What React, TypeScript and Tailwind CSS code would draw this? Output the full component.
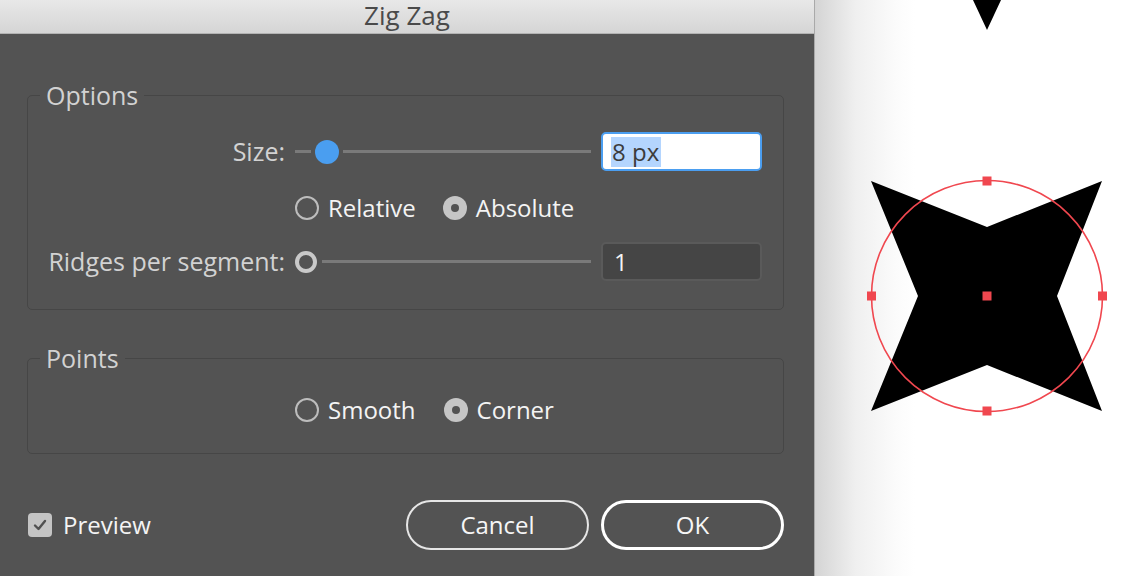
import React from "react";

const font = { fontFamily: '"Open Sans", "Noto Sans", sans-serif' };

function Radio({ label, checked }: { label: string; checked?: boolean }) {
  return (
    <div className="flex items-center gap-[9px]">
      {checked ? (
        <span className="w-[24px] h-[24px] rounded-full bg-[#c6c6c6] flex items-center justify-center">
          <span className="w-[8px] h-[8px] rounded-full bg-[#535353]" />
        </span>
      ) : (
        <span className="w-[24px] h-[24px] rounded-full border-2 border-[#bdbdbd]" />
      )}
      <span className="text-[24px] leading-none text-[#f4f4f4] font-medium">{label}</span>
    </div>
  );
}

function Track({ className }: { className: string }) {
  return <div className={"h-[3px] bg-[#7a7a7a] " + className} />;
}

export default function App() {
  return (
    <div className="w-[1136px] h-[576px] flex overflow-hidden" style={font}>
      {/* dialog */}
      <div className="w-[815px] h-full flex flex-col bg-[#535353] border-r border-[#a9a9a9]">
        <div className="h-[34px] shrink-0 flex items-start justify-center bg-gradient-to-b from-[#e8e8e8] to-[#d5d5d5] border-b border-[#b3b3b3]">
          <span className="text-[26px] leading-[30px] text-[#4a4a4a]">Zig Zag</span>
        </div>

        <div className="flex-1 flex flex-col pl-[27px] pr-[30px] pt-[49px]">
          {/* Options */}
          <fieldset className="border border-[#464646] rounded-[5px] pb-[28px]">
            <legend className="ml-[12px] px-[6px] text-[25px] leading-[25px] text-[#d2d2d2]">Options</legend>
            <div className="pt-[24px] pl-[19px] pr-[20px] flex flex-col">
              <div className="h-[39px] grid grid-cols-[238px_296px_161px] gap-x-[10px] items-center">
                <span className="text-[25px] leading-none text-[#d2d2d2] text-right">Size:</span>
                <div className="flex items-center">
                  <Track className="w-[16px]" />
                  <span className="ml-[4px] w-[24px] h-[24px] rounded-full bg-[#4a9ef0]" />
                  <Track className="ml-[4px] flex-1" />
                </div>
                <div className="h-[39px] rounded-[5px] border-2 border-[#4b9ef0] bg-white flex items-center pl-[8px]">
                  <span className="bg-[#b4d5fe] text-[24px] leading-[30px] text-[#3c3c3c] pr-[2px] pl-[1px]">8 px</span>
                </div>
              </div>
              <div className="h-[24px] mt-[25px] grid grid-cols-[238px_1fr] gap-x-[10px] items-center">
                <span />
                <div className="flex items-center gap-[27px]">
                  <Radio label="Relative" />
                  <Radio label="Absolute" checked />
                </div>
              </div>
              <div className="h-[39px] mt-[22px] grid grid-cols-[238px_296px_161px] gap-x-[10px] items-center">
                <span className="text-[25px] leading-none text-[#d2d2d2] text-right whitespace-nowrap">Ridges per segment:</span>
                <div className="flex items-center">
                  <span className="w-[22px] h-[22px] rounded-full border-4 border-[#c9c9c9]" />
                  <Track className="ml-[5px] flex-1" />
                </div>
                <div className="h-[39px] rounded-[5px] border-2 border-[#5a5a5a] bg-[#454545] flex items-center pl-[11px]">
                  <span className="text-[24px] leading-none text-[#f4f4f4]">1</span>
                </div>
              </div>
            </div>
          </fieldset>

          {/* Points */}
          <fieldset className="mt-[36px] border border-[#464646] rounded-[5px] pb-[31px]">
            <legend className="ml-[12px] px-[6px] text-[25px] leading-[25px] text-[#d2d2d2]">Points</legend>
            <div className="pt-[27px] pl-[19px] pr-[20px] h-[51px] grid grid-cols-[238px_1fr] gap-x-[10px] items-center">
              <span />
              <div className="flex items-center gap-[28px]">
                <Radio label="Smooth" />
                <Radio label="Corner" checked />
              </div>
            </div>
          </fieldset>

          {/* footer */}
          <div className="mt-[46px] flex items-center">
            <div className="flex items-center gap-[11px] ml-[1px]">
              <span className="w-[24px] h-[24px] rounded-[4px] bg-[#c4c4c4] flex items-center justify-center">
                <svg width="16" height="16" viewBox="0 0 16 16">
                  <path d="M3 8.5 L6.5 12 L13 4" fill="none" stroke="#505050" strokeWidth="2.4" strokeLinecap="round" strokeLinejoin="round" />
                </svg>
              </span>
              <span className="text-[24px] leading-none text-[#f4f4f4] font-medium">Preview</span>
            </div>
            <div className="ml-auto flex gap-[12px]">
              <button className="w-[183px] h-[50px] rounded-full border-2 border-[#e6e6e6] text-[24px] text-[#f6f6f6] font-medium">
                Cancel
              </button>
              <button className="w-[183px] h-[50px] rounded-full border-[3px] border-white text-[24px] text-[#f6f6f6] font-medium">
                OK
              </button>
            </div>
          </div>
        </div>
      </div>

      {/* canvas */}
      <div className="flex-1 h-full bg-[linear-gradient(to_right,#d4d4d4,#efefef_40px,#fbfbfb_80px,#ffffff_100px)]">
        <svg width="321" height="576" viewBox="0 0 321 576">
          <polygon points="158,0 186,0 172,30" fill="#000" />
          <polygon
            points="56,181 172,227 287,181 242,296 287,411 172,365 56,411 103,296"
            fill="#000"
          />
          <circle cx="172" cy="296" r="115.5" fill="none" stroke="#f0474f" strokeWidth="1.6" />
          <rect x="167.5" y="176.5" width="9" height="9" fill="#f0474f" />
          <rect x="167.5" y="406.5" width="9" height="9" fill="#f0474f" />
          <rect x="52" y="291.5" width="9" height="9" fill="#f0474f" />
          <rect x="283" y="291.5" width="9" height="9" fill="#f0474f" />
          <rect x="167.5" y="291.5" width="9" height="9" fill="#f0474f" />
        </svg>
      </div>
    </div>
  );
}
